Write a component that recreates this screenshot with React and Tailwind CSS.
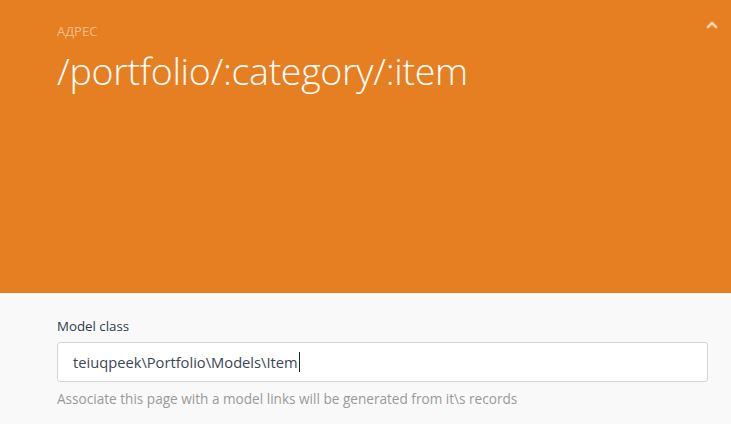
import React from 'react';

const App = () => {
    return (
        <div className="w-[731px] h-[424px] overflow-hidden bg-[#f9f9f9] font-['Open_Sans',sans-serif]">
            <div className="relative h-[293px] bg-[#e67e22] px-[57px] pt-[22px]">
                <div className="text-[13px] uppercase text-[#f5bd88] leading-[18px]">Адрес</div>
                <h1 className="mt-[7px] text-[37.5px] font-light text-white leading-[48px] tracking-[-0.3px]">
                    /portfolio/:category/:item
                </h1>
                <button className="absolute right-[12px] top-[18px] text-[#fbd3ad]">
                    <svg width="14" height="14" viewBox="0 0 14 14" fill="none">
                        <path d="M3 9l4-4 4 4" stroke="currentColor" strokeWidth="2.6" strokeLinecap="round" strokeLinejoin="round" />
                    </svg>
                </button>
            </div>
            <div className="px-[57px] pt-[24px]">
                <label className="block text-[13.3px] text-[#2b3e50] leading-[18px] mb-[7px]">Model class</label>
                <div className="h-[40px] w-[651px] bg-white border border-[#d1d6d9] rounded-[3px] flex items-center px-[15px]">
                    <span className="text-[14.7px] text-[#3a4656]">teiuqpeek\Portfolio\Models\Item</span>
                    <span className="w-px h-[20px] bg-[#1d2733] ml-[1px]"></span>
                </div>
                <p className="mt-[7px] text-[13.6px] text-[#999999] leading-[20px]">
                    Associate this page with a model links will be generated from it\s records
                </p>
            </div>
        </div>
    );
};

export default App;
